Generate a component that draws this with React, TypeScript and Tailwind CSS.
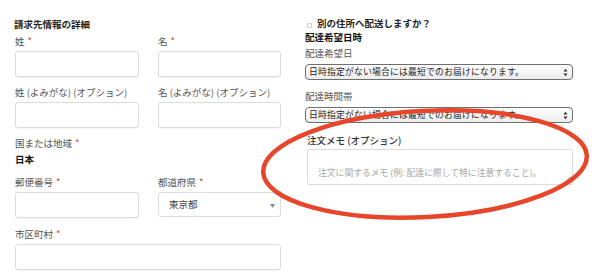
import React from 'react';

const font = { fontFamily: '"Noto Sans CJK JP", "Noto Sans", sans-serif' };

function Label({ text, req }: { text: string; req?: boolean }) {
  return (
    <p className="text-[9.5px] leading-[12px] text-[#555]">
      {text}
      {req && <span className="text-[#e2401c] ml-[3px]">*</span>}
    </p>
  );
}

function Input({ className = '' }: { className?: string }) {
  return (
    <div className={`h-[26px] rounded-[3px] border border-[#dcdcdc] bg-white shadow-[0_1px_1px_rgba(0,0,0,0.04)] ${className}`} />
  );
}

function MacSelect({ text }: { text: string }) {
  return (
    <div className="h-[16px] rounded-[4px] border border-[#6f6f6f] bg-gradient-to-b from-white to-[#ececec] flex items-center justify-between pl-[3px] pr-[4px]">
      <span className="text-[8.8px] leading-none text-[#222] tracking-[0.2px]">{text}</span>
      <svg width="5" height="9" viewBox="0 0 5 9">
        <path d="M0.5 3.5 L2.5 0.8 L4.5 3.5 Z" fill="#333" />
        <path d="M0.5 5.5 L2.5 8.2 L4.5 5.5 Z" fill="#333" />
      </svg>
    </div>
  );
}

export default function App() {
  return (
    <div className="relative w-[600px] h-[273px] bg-white overflow-hidden" style={font}>
      <div className="flex">
        {/* Billing */}
        <div className="w-[281px] pl-[15px] pt-[18px]">
          <h3 className="text-[9.5px] leading-[12px] font-bold text-[#222] -ml-[1px]">請求先情報の詳細</h3>
          <div className="grid grid-cols-[124px_123px] gap-x-[19px] mt-[5px]">
            <div>
              <Label text="姓" req />
              <Input className="mt-[4px]" />
            </div>
            <div>
              <Label text="名" req />
              <Input className="mt-[4px]" />
            </div>
            <div className="mt-[9px]">
              <Label text="姓 (よみがな) (オプション)" />
              <Input className="mt-[4px]" />
            </div>
            <div className="mt-[9px]">
              <Label text="名 (よみがな) (オプション)" />
              <Input className="mt-[4px]" />
            </div>
          </div>
          <div className="mt-[9px]">
            <Label text="国または地域" req />
            <p className="mt-[4px] text-[9.5px] leading-[12px] font-bold text-[#111]">日本</p>
          </div>
          <div className="grid grid-cols-[124px_123px] gap-x-[19px] mt-[11px]">
            <div>
              <Label text="郵便番号" req />
              <Input className="mt-[4px] h-[25px]" />
            </div>
            <div>
              <Label text="都道府県" req />
              <div className="mt-[4px] h-[25px] rounded-[3px] border border-[#dcdcdc] bg-white flex items-center justify-between pl-[10px] pr-[5px]">
                <span className="text-[9.5px] text-[#444]">東京都</span>
                <span className="text-[5px] text-[#888]">▼</span>
              </div>
            </div>
          </div>
          <div className="mt-[10px]">
            <Label text="市区町村" req />
            <Input className="mt-[4px] h-[25px] w-[266px]" />
          </div>
        </div>

        {/* Shipping */}
        <div className="w-[268px] ml-[24px] pt-[17px]">
          <div className="flex items-center h-[12px]">
            <span className="w-[5px] h-[5px] border border-[#ccc] rounded-[1px] mt-[4px] ml-[2px]" />
            <span className="ml-[5px] text-[9.5px] leading-[12px] font-bold text-[#222]">別の住所へ配送しますか？</span>
          </div>
          <h3 className="mt-[2px] text-[9.5px] leading-[12px] font-bold text-[#111]">配達希望日時</h3>
          <div className="mt-[4px]">
            <Label text="配達希望日" />
            <div className="mt-[5px]">
              <MacSelect text="日時指定がない場合には最短でのお届けになります。" />
            </div>
          </div>
          <div className="mt-[10px]">
            <Label text="配達時間帯" />
            <div className="mt-[5px]">
              <MacSelect text="日時指定がない場合には最短でのお届けになります。" />
            </div>
          </div>
          <div className="mt-[11px] pl-[2px]">
            <p className="text-[9.5px] leading-[12px] font-medium text-[#333]">注文メモ (オプション)</p>
            <div className="relative mt-[3px] h-[36px] rounded-[2px] border border-[#dcdcdc] bg-white pl-[10px] pt-[7px]">
              <span className="text-[8.8px] leading-[12px] text-[#a8a8a8]">注文に関するメモ (例: 配達に際して特に注意すること)。</span>
              <svg className="absolute right-[1px] bottom-[1px]" width="7" height="7" viewBox="0 0 7 7">
                <path d="M6.5 1 L1 6.5 M6.5 4 L4 6.5" stroke="#777" strokeWidth="0.9" />
              </svg>
            </div>
          </div>
        </div>
      </div>

      {/* hand-drawn highlight */}
      <svg className="absolute left-0 top-0 pointer-events-none" width="600" height="273" viewBox="0 0 600 273">
        <ellipse cx="425" cy="164" rx="162" ry="53" transform="rotate(-3 425 164)" fill="none" stroke="#e8462a" strokeWidth="4.5" />
      </svg>
    </div>
  );
}
